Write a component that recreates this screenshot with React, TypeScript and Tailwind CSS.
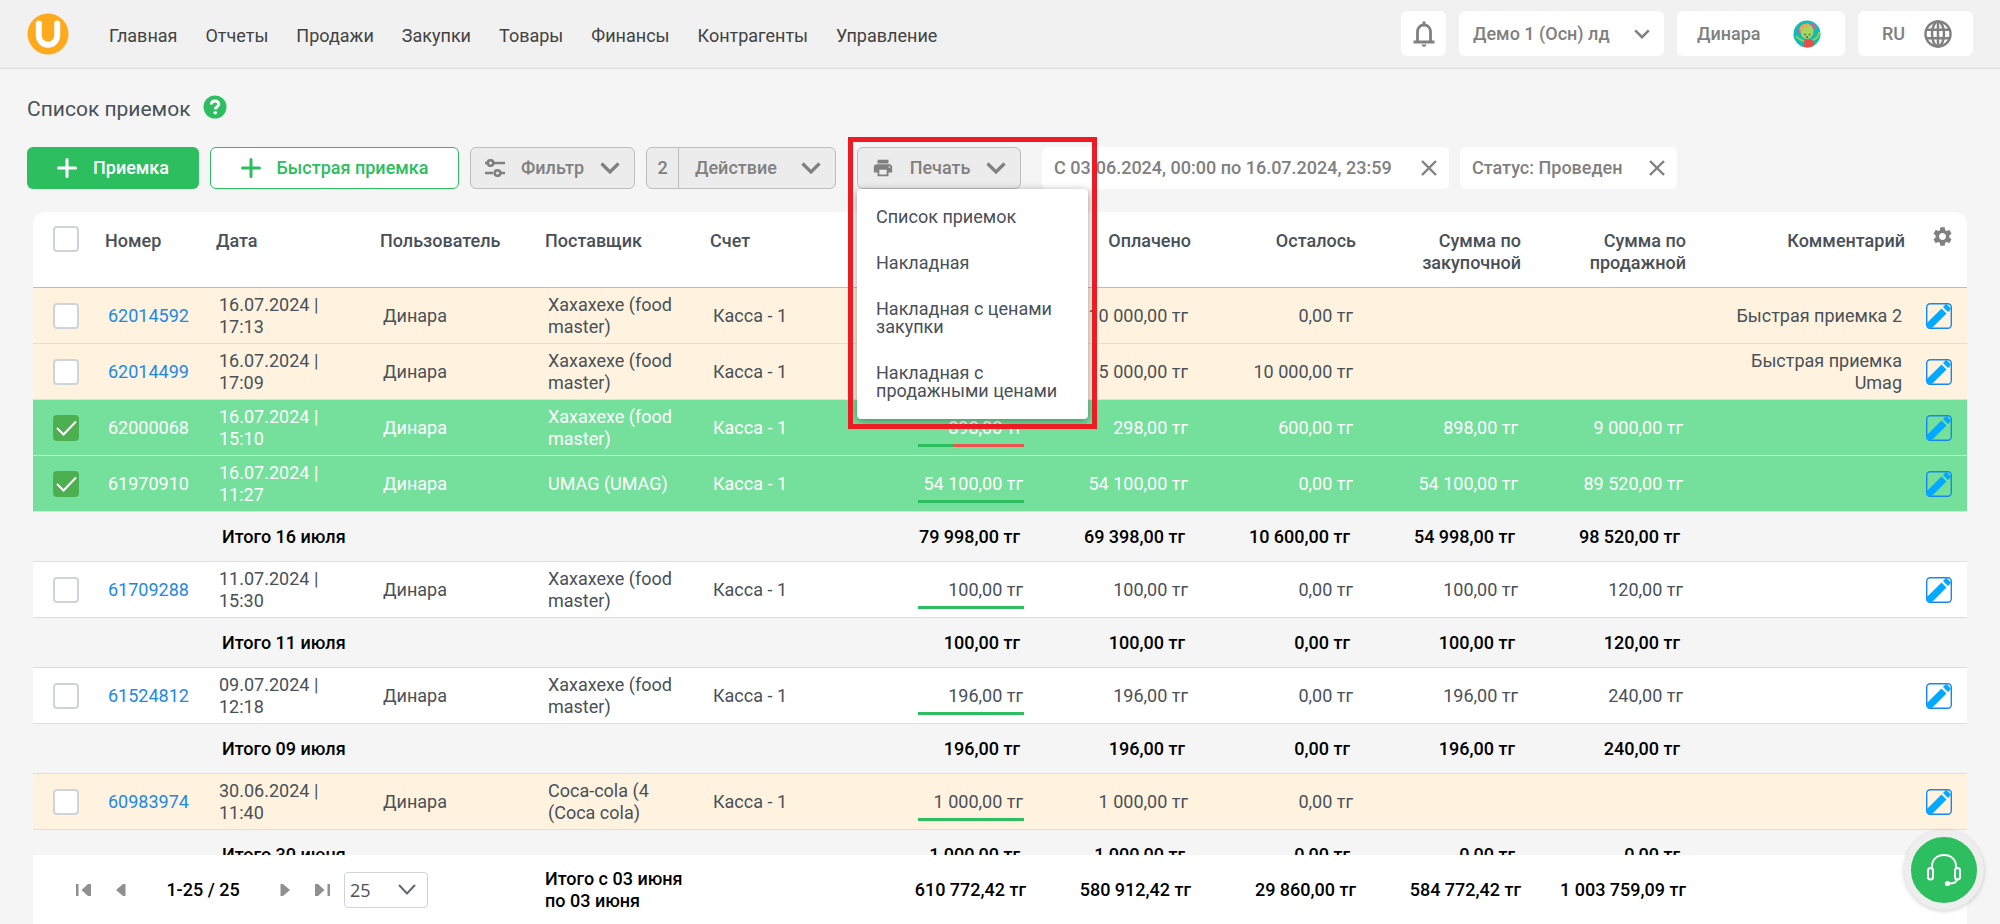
import React, { useState } from "react";
import clsx from "clsx";
import { MdPrint, MdSettings } from "react-icons/md";

type Receipt = {
  id: string;
  date: string;
  time: string;
  user: string;
  supplier: string;
  account: string;
  cost: string;
  paid: string;
  rest: string;
  purchase: string;
  sale: string;
  comment?: string;
  paidPart: number; // доля оплаты, 0..1
  quick?: boolean;
};

type Group = { label: string; sums: string[]; rows: Receipt[] };

const MENU = ["Главная", "Отчеты", "Продажи", "Закупки", "Товары", "Финансы", "Контрагенты", "Управление"];

const PRINT_ITEMS = ["Список приемок", "Накладная", "Накладная с ценами закупки", "Накладная с продажными ценами"];

const base = { user: "Динара", supplier: "Хахахехе (food master)", account: "Касса - 1", paidPart: 1 };

const GROUPS: Group[] = [
  {
    label: "Итого 16 июля",
    sums: ["79 998,00 тг", "69 398,00 тг", "10 600,00 тг", "54 998,00 тг", "98 520,00 тг"],
    rows: [
      { ...base, id: "62014592", date: "16.07.2024", time: "17:13", cost: "10 000,00 тг", paid: "10 000,00 тг", rest: "0,00 тг", purchase: "", sale: "", comment: "Быстрая приемка 2", quick: true },
      { ...base, id: "62014499", date: "16.07.2024", time: "17:09", cost: "15 000,00 тг", paid: "5 000,00 тг", rest: "10 000,00 тг", purchase: "", sale: "", comment: "Быстрая приемка Umag", quick: true },
      { ...base, id: "62000068", date: "16.07.2024", time: "15:10", cost: "898,00 тг", paid: "298,00 тг", rest: "600,00 тг", purchase: "898,00 тг", sale: "9 000,00 тг", paidPart: 0.33 },
      { ...base, id: "61970910", date: "16.07.2024", time: "11:27", supplier: "UMAG (UMAG)", cost: "54 100,00 тг", paid: "54 100,00 тг", rest: "0,00 тг", purchase: "54 100,00 тг", sale: "89 520,00 тг" },
    ],
  },
  {
    label: "Итого 11 июля",
    sums: ["100,00 тг", "100,00 тг", "0,00 тг", "100,00 тг", "120,00 тг"],
    rows: [
      { ...base, id: "61709288", date: "11.07.2024", time: "15:30", cost: "100,00 тг", paid: "100,00 тг", rest: "0,00 тг", purchase: "100,00 тг", sale: "120,00 тг" },
    ],
  },
  {
    label: "Итого 09 июля",
    sums: ["196,00 тг", "196,00 тг", "0,00 тг", "196,00 тг", "240,00 тг"],
    rows: [
      { ...base, id: "61524812", date: "09.07.2024", time: "12:18", cost: "196,00 тг", paid: "196,00 тг", rest: "0,00 тг", purchase: "196,00 тг", sale: "240,00 тг" },
    ],
  },
  {
    label: "Итого 30 июня",
    sums: ["1 000,00 тг", "1 000,00 тг", "0,00 тг", "0,00 тг", "0,00 тг"],
    rows: [
      { ...base, id: "60983974", date: "30.06.2024", time: "11:40", supplier: "Coca-cola (4 (Coca cola)", cost: "1 000,00 тг", paid: "1 000,00 тг", rest: "0,00 тг", purchase: "", sale: "", quick: true },
    ],
  },
];

const TOTALS = ["610 772,42 тг", "580 912,42 тг", "29 860,00 тг", "584 772,42 тг", "1 003 759,09 тг"];

const Chevron = ({ className = "w-5 h-3" }: { className?: string }) => (
  <svg viewBox="0 0 20 12" className={clsx("shrink-0", className)} fill="none" stroke="currentColor" strokeWidth="3.2">
    <path d="M1.5 1.5 10 10l8.5-8.5" />
  </svg>
);

const Plus = () => (
  <svg viewBox="0 0 20 20" className="w-5 h-5 shrink-0" fill="none" stroke="currentColor" strokeWidth="3" strokeLinecap="round">
    <path d="M10 1.5v17M1.5 10h17" />
  </svg>
);

const Cross = () => (
  <svg viewBox="0 0 16 16" className="w-4 h-4" fill="none" stroke="currentColor" strokeWidth="2.4">
    <path d="m1 1 14 14M15 1 1 15" />
  </svg>
);

const Sliders = () => (
  <svg viewBox="0 0 20 18" className="w-5 h-[18px] shrink-0" fill="none" stroke="currentColor" strokeWidth="2.6">
    <path d="M0 4h2M9 4h11M0 14h8M15 14h5" />
    <circle cx="5.5" cy="4" r="2.8" />
    <circle cx="12.5" cy="14" r="2.8" />
  </svg>
);

const Logo = () => (
  <svg viewBox="0 0 42 42" className="w-[42px] h-[42px]">
    <circle cx="21" cy="21" r="20.5" fill="#ffa91f" />
    <path d="M11.8 10.5v12a9.2 9.2 0 0 0 18.4 0v-12" fill="none" stroke="#fff" strokeWidth="6" strokeLinecap="round" />
  </svg>
);

const Help = () => (
  <svg viewBox="0 0 24 24" className="w-6 h-6">
    <circle cx="12" cy="12" r="11.5" fill="#2dbe60" />
    <path d="M8.3 9.6c0-2.3 1.6-3.7 3.8-3.7 2.1 0 3.7 1.3 3.7 3.2 0 2.6-3.4 2.7-3.5 5.3" fill="none" stroke="#fff" strokeWidth="3" />
    <circle cx="12.2" cy="17.7" r="1.8" fill="#fff" />
  </svg>
);

const Bell = () => (
  <svg viewBox="0 0 22 26" className="w-[22px] h-[26px]" fill="none" stroke="currentColor" strokeWidth="2.8">
    <path d="M4.5 20.500V11c0-4.200 2.800-7 6.500-7s6.500 2.800 6.500 7v9.500" />
    <path d="M.5 21h21M11 .5v3" />
    <path d="M8.500 23.500h5a2.500 2.200 0 0 1-5 0Z" fill="currentColor" stroke="none" />
  </svg>
);

const Globe = () => (
  <svg viewBox="0 0 28 28" className="w-7 h-7" fill="none" stroke="currentColor" strokeWidth="2.5">
    <circle cx="14" cy="14" r="12.5" />
    <ellipse cx="14" cy="14" rx="6" ry="12.5" />
    <path d="M14 1.5v25M2.5 9.700h23M2.500 18.300h23" />
  </svg>
);

const Avatar = () => (
  <svg viewBox="0 0 28 28" className="w-7 h-7">
    <circle cx="14" cy="14" r="13.5" fill="#10bcb4" />
    <path d="M3 16.500c1.500.5 3.500 4 8 4.500M26 12c0 4-2.500 7-7 8.500" fill="none" stroke="#8fcf5a" strokeWidth="2" />
    <circle cx="18.500" cy="7" r="3.800" fill="#c06a9c" />
    <circle cx="7.500" cy="11" r="2.500" fill="#c06a9c" />
    <ellipse cx="14" cy="11.500" rx="6.500" ry="7.500" fill="#a4d65e" />
    <path d="M6.500 10.500C6 6 9.500 3 15.500 3.500c-.5 3.500-4.500 4-9 7Z" fill="#f5a15c" />
    <path d="M11.500 19.500h7l2.500 2-.5 4.500a13.500 13.500 0 0 1-9.500 1Z" fill="#eb4d4b" />
    <path d="M12.500 16.500h3l-1.500 1.800Z" fill="#3d3d3d" />
    <circle cx="12" cy="14.500" r=".8" fill="#3d3d3d" />
    <circle cx="16.500" cy="14.500" r=".8" fill="#3d3d3d" />
  </svg>
);

const Pencil = () => (
  <svg viewBox="0 0 26 26" className="w-[26px] h-[26px]">
    <rect x=".7" y=".7" width="24.600" height="24.600" rx="3.5" fill="none" stroke="#1786f5" strokeWidth="1.400" />
    <path d="M15.500 5.500 20.500 10.500 7 24 5 25.300H2.500A1.800 1.800 0 0 1 .7 23.500V20.300Z" fill="#03a9ff" />
    <path d="m17 4 2.200-2.200c.6-.6 1.400-.6 2 0l3 3c.6.6.6 1.400 0 2L22 9Z" fill="#03a9ff" />
  </svg>
);

const Headset = () => (
  <svg viewBox="0 0 36 36" className="w-9 h-9" fill="none" stroke="#fff" strokeWidth="2" strokeLinecap="round">
    <path d="M6 16v-1.500C6 7.500 11 3 18 3s12 4.500 12 11.500V16M31 27c0 3-3 4.500-8.500 4.500" />
    <rect x="2" y="16" width="5" height="11.500" rx="2.500" />
    <rect x="29" y="16" width="5" height="11.500" rx="2.500" />
    <circle cx="21.500" cy="31.500" r="1.600" fill="#fff" />
  </svg>
);

function Tick({ label, checked, onChange }: { label: string; checked: boolean; onChange: () => void }) {
  return (
    <label className="relative block w-[26px] h-[26px]">
      <input
        type="checkbox"
        aria-label={label}
        checked={checked}
        onChange={onChange}
        className="block appearance-none w-[26px] h-[26px] rounded border-2 border-[#ced4da] bg-white checked:bg-[#4caf50] checked:border-[#4caf50]"
      />
      {checked && (
        <svg viewBox="0 0 26 26" className="absolute inset-0 pointer-events-none" fill="none" stroke="#fff" strokeWidth="2">
          <path d="m4 13 6.500 6.500L23 6.500" />
        </svg>
      )}
    </label>
  );
}

// общие ширины колонок для списка и строки итогов
const Columns = () => (
  <colgroup>
    <col className="w-[62px]" />
    <col className="w-[111px]" />
    <col className="w-[164px]" />
    <col className="w-[165px]" />
    <col className="w-[165px]" />
    <col className="w-[165px]" />
    <col className="w-[165px]" />
    <col className="w-[165px]" />
    <col className="w-[165px]" />
    <col className="w-[165px]" />
    <col className="w-[165px]" />
    <col />
    <col className="w-[58px]" />
  </colgroup>
);

const toolBtn = "flex items-center h-[42px] rounded-md border border-[#bdbdbd] bg-[#ececec] text-[#808080] font-medium";
const chip = "flex items-center justify-between h-[42px] rounded-md bg-white text-[#808080] font-medium px-3";
const headBtn = "flex items-center h-[45px] rounded-md bg-white text-[#808080] font-medium";

export default function App() {
  const [selected, setSelected] = useState<string[]>(["62000068", "61970910"]);
  const [printOpen, setPrintOpen] = useState(true);

  const toggle = (id: string) =>
    setSelected(selected.includes(id) ? selected.filter((x) => x !== id) : [...selected, id]);

  const ids = GROUPS.flatMap((g) => g.rows.map((r) => r.id));
  const all = selected.length === ids.length;

  return (
    <div className="h-screen flex flex-col overflow-hidden bg-[#f5f5f5] font-['Roboto',sans-serif] text-[18px] leading-[22px] text-[#495057]">
      <header className="flex items-center justify-between h-[69px] shrink-0 px-[27px] pb-px bg-[#f1f1f1] border-b border-[#dedede]">
        <div className="flex items-center gap-10">
          <a href="#" aria-label="Umag">
            <Logo />
          </a>
          <nav className="flex gap-7 pt-1 text-[#424242]">
            {MENU.map((m) => (
              <a key={m} href="#">
                {m}
              </a>
            ))}
          </nav>
        </div>
        <div className="flex gap-[13px]">
          <button aria-label="Уведомления" className={clsx(headBtn, "w-[45px] justify-center")}>
            <Bell />
          </button>
          <button className={clsx(headBtn, "w-[205px] justify-between px-[14px]")}>
            Демо 1 (Осн) лд
            <Chevron className="w-4 h-[10px]" />
          </button>
          <button className={clsx(headBtn, "w-[168px] justify-between pl-5 pr-6")}>
            Динара
            <Avatar />
          </button>
          <button className={clsx(headBtn, "w-[115px] justify-between pl-6 pr-[21px]")}>
            RU
            <Globe />
          </button>
        </div>
      </header>

      <div className="flex items-center gap-3 px-[27px] pt-6 shrink-0">
        <h1 className="text-[21px] leading-6 pt-1">Список приемок</h1>
        <button aria-label="Помощь">
          <Help />
        </button>
      </div>

      <div className="flex gap-[11px] px-[27px] pt-[26px] pb-[23px] shrink-0">
        <button className="flex items-center justify-center gap-4 w-[172px] h-[42px] rounded-md bg-[#2dbe60] text-white font-medium">
          <Plus />
          Приемка
        </button>
        <button className="flex items-center justify-center gap-4 w-[249px] h-[42px] rounded-md border border-[#2dbe60] bg-white text-[#2dbe60] font-medium">
          <Plus />
          Быстрая приемка
        </button>
        <button className={clsx(toolBtn, "w-[165px] justify-between px-[14px]")}>
          <Sliders />
          Фильтр
          <Chevron />
        </button>
        <button className={clsx(toolBtn, "w-[190px] pr-[14px]")}>
          <span className="flex items-center justify-center w-8 h-full border-r border-[#bdbdbd]">{selected.length}</span>
          <span className="grow text-left pl-4">Действие</span>
          <Chevron />
        </button>
        <div className="relative ml-[10px]">
          <button className={clsx(toolBtn, "w-[164px] justify-between px-[14px]")} onClick={() => setPrintOpen(!printOpen)}>
            <MdPrint size={22} />
            Печать
            <Chevron />
          </button>
          {printOpen && (
            <>
              <ul className="absolute z-10 top-[42px] left-0 w-[231px] py-[5px] rounded bg-white shadow-[0_2px_8px_rgba(0,0,0,0.4)] leading-[18px]">
                {PRINT_ITEMS.map((p) => (
                  <li key={p}>
                    <button className="w-full px-[19px] py-[14px] text-left">{p}</button>
                  </li>
                ))}
              </ul>
              <div className="absolute z-20 -top-[10px] -left-[9px] w-[249px] h-[292px] border-[5px] border-[#ed1c24] pointer-events-none" />
            </>
          )}
        </div>
        <div className={clsx(chip, "w-[407px] ml-[10px]")}>
          С 03.06.2024, 00:00 по 16.07.2024, 23:59
          <button aria-label="Убрать период">
            <Cross />
          </button>
        </div>
        <div className={clsx(chip, "w-[217px]")}>
          Статус: Проведен
          <button aria-label="Убрать статус">
            <Cross />
          </button>
        </div>
      </div>

      <main className="grow min-h-0 overflow-hidden mx-[33px] rounded-t-xl">
        <table className="w-full table-fixed border-separate border-spacing-0">
          <Columns />
          <thead>
            <tr className="h-[76px] bg-white align-top [&>th]:border-b [&>th]:border-[#bdbdbd] [&>th]:font-medium [&>th]:pt-[18px] [&>th]:pl-[10px] [&>th]:pr-1">
              <th className="!pt-[14px] !pl-5">
                <Tick label="Выбрать все" checked={all} onChange={() => setSelected(all ? [] : ids)} />
              </th>
              <th className="text-left">Номер</th>
              <th className="text-left">Дата</th>
              <th className="text-left">Пользователь</th>
              <th className="text-left">Поставщик</th>
              <th className="text-left">Счет</th>
              <th className="text-right">Стоимость</th>
              <th className="text-right">Оплачено</th>
              <th className="text-right">Осталось</th>
              <th className="text-right">Сумма по закупочной</th>
              <th className="text-right">Сумма по продажной</th>
              <th className="text-right">Комментарий</th>
              <th className="!pt-[13px] !pl-[22px] text-left text-[#808080]">
                <button aria-label="Настройки">
                  <MdSettings size={23} />
                </button>
              </th>
            </tr>
          </thead>
          <tbody>
            {GROUPS.map((g) => (
              <React.Fragment key={g.label}>
                {g.rows.map((r) => {
                  const on = selected.includes(r.id);
                  return (
                    <tr
                      key={r.id}
                      className={clsx(
                        "h-[56px] [&>td]:border-b [&>td]:border-[#dedede] [&>td]:p-0 [&>td]:pl-[13px] [&>td]:pr-[7px]",
                        on ? "bg-[#74e09b] text-white" : r.quick ? "bg-[#fff3e0]" : "bg-white"
                      )}
                    >
                      <td className="!pl-5">
                        <Tick label={r.id} checked={on} onChange={() => toggle(r.id)} />
                      </td>
                      <td>
                        <a href="#" className={on ? "text-white" : "text-[#1e88e5]"}>
                          {r.id}
                        </a>
                      </td>
                      <td>
                        {r.date} |<br />
                        {r.time}
                      </td>
                      <td>{r.user}</td>
                      <td>{r.supplier}</td>
                      <td>{r.account}</td>
                      <td className="text-right">
                        <div className="pt-2">{r.cost}</div>
                        <div className="flex w-[106px] h-[3px] mt-[5px] -mr-px ml-auto bg-[#ef5350]">
                          <div className="bg-[#2dbe60]" style={{ width: `${r.paidPart * 100}%` }} />
                        </div>
                      </td>
                      <td className="text-right">{r.paid}</td>
                      <td className="text-right">{r.rest}</td>
                      <td className="text-right">{r.purchase}</td>
                      <td className="text-right">{r.sale}</td>
                      <td className="text-right">{r.comment}</td>
                      <td className="!pl-[17px]">
                        <button aria-label="Изменить" className="block">
                          <Pencil />
                        </button>
                      </td>
                    </tr>
                  );
                })}
                <tr className="h-[50px] text-black font-medium [&>td]:border-b [&>td]:border-[#dedede] [&>td]:p-0 [&>td]:pr-[10px]">
                  <td colSpan={2} />
                  <td colSpan={4} className="!pl-4">
                    {g.label}
                  </td>
                  {g.sums.map((s, i) => (
                    <td key={i} className="text-right">
                      {s}
                    </td>
                  ))}
                  <td colSpan={2} />
                </tr>
              </React.Fragment>
            ))}
          </tbody>
        </table>
      </main>

      <footer className="shrink-0 mx-[33px] bg-white text-black font-medium">
        <table className="w-full table-fixed border-separate border-spacing-0">
          <Columns />
          <tbody>
            <tr className="h-[69px] [&>td]:p-0 [&>td]:pr-1">
              <td colSpan={4}>
                <div className="flex items-center pl-[43px] text-[#909090]">
                  <button aria-label="Первая страница">
                    <svg viewBox="0 0 16 12" className="w-4 h-3" fill="currentColor">
                      <path d="M0 0h2.500v12H0zM15 0v12l-3 0L5.500 6 12 0z" />
                    </svg>
                  </button>
                  <button aria-label="Назад" className="ml-6">
                    <svg viewBox="0 0 10 12" className="w-[10px] h-3" fill="currentColor">
                      <path d="M9.500 0v12H7L0 6l7-6z" />
                    </svg>
                  </button>
                  <span className="w-[154px] text-center text-black">1-25 / 25</span>
                  <button aria-label="Вперед">
                    <svg viewBox="0 0 10 12" className="w-[10px] h-3" fill="currentColor">
                      <path d="M.5 0v12H3l7-6-7-6z" />
                    </svg>
                  </button>
                  <button aria-label="Последняя страница" className="ml-6">
                    <svg viewBox="0 0 16 12" className="w-4 h-3" fill="currentColor">
                      <path d="M13.500 0H16v12h-2.500zM1 0v12h3l6.500-6L4 0z" />
                    </svg>
                  </button>
                  <div className="relative ml-[14px] text-[#5f6b76]">
                    <select
                      aria-label="Строк на странице"
                      defaultValue="25"
                      className="block appearance-none w-[84px] h-9 pl-[5px] rounded border border-[#ced4da] bg-white font-['Open_Sans',sans-serif] font-normal text-[#495057]"
                    >
                      <option>25</option>
                      <option>50</option>
                      <option>100</option>
                    </select>
                    <svg viewBox="0 0 18 11" className="absolute right-3 top-3 w-[18px] h-[11px] pointer-events-none" fill="none" stroke="currentColor" strokeWidth="2">
                      <path d="m1 1 8 8.500L17 1" />
                    </svg>
                  </div>
                </div>
              </td>
              <td colSpan={2} className="!pl-[10px]">
                Итого с 03 июня
                <br />
                по 03 июня
              </td>
              {TOTALS.map((s, i) => (
                <td key={i} className="text-right">
                  {s}
                </td>
              ))}
              <td colSpan={2} />
            </tr>
          </tbody>
        </table>
      </footer>

      <button aria-label="Поддержка" className="fixed z-30 right-4 bottom-[14px] flex items-center justify-center w-20 h-20 rounded-full border-[7px] border-[#eeeeee] bg-[#2dbe60] shadow-[0_1px_4px_rgba(0,0,0,0.2)]">
        <Headset />
      </button>
    </div>
  );
}
